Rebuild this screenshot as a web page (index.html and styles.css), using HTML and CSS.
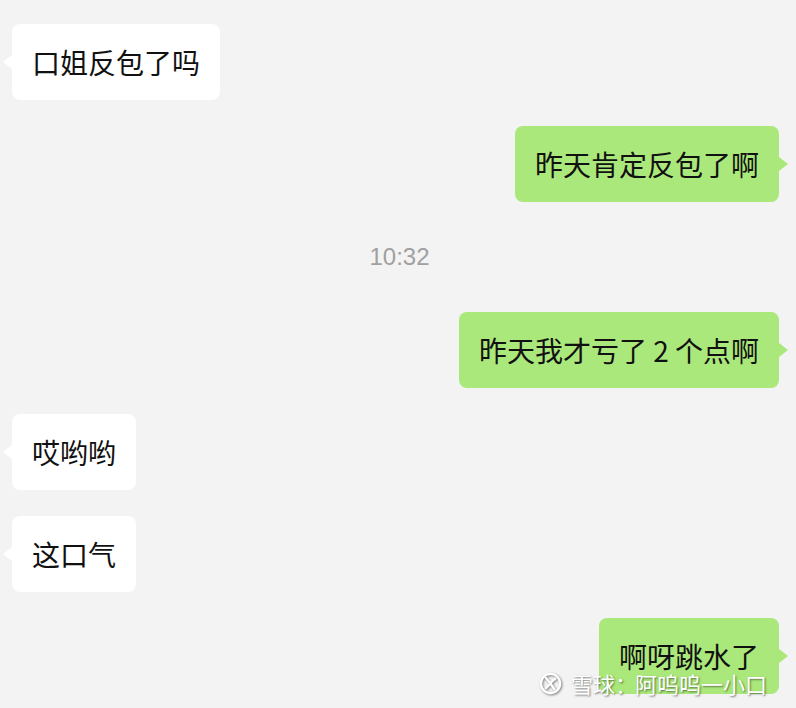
FILE: index.html
```html
<!DOCTYPE html>
<html lang="zh-CN">
<head>
<meta charset="utf-8">
<title>聊天记录</title>
<meta name="viewport" content="width=device-width,initial-scale=1">
<link rel="stylesheet" href="styles.css">
</head>
<body>

<div class="chat">
  <div class="msg in">口姐反包了吗</div>
  <div class="msg out">昨天肯定反包了啊</div>
  <div class="time">10:32</div>
  <div class="msg out">昨天我才亏了 2 个点啊</div>
  <div class="msg in">哎哟哟</div>
  <div class="msg in">这口气</div>
  <div class="msg out">啊呀跳水了</div>
</div>

<div class="mark">
  <svg viewBox="0 0 24 24" width="23" height="23">
    <circle cx="12" cy="12" r="10" fill="none" stroke="#fff" stroke-width="2.4"/>
    <path d="M7 6c3 3 6 7 9 12M17 7c-2 1-4 3-5 5M7 17c1-1 3-3 4-4" fill="none" stroke="#fff" stroke-width="2.4" stroke-linecap="round"/>
  </svg>
  <span>雪球<span class="colon">：</span>阿呜呜一小口</span>
</div>

</body>
</html>
```

FILE: styles.css
```css
:root{--bg:#f3f3f3;--green:#abe87b;--white:#fff;--fg:#111}
*{box-sizing:border-box}
body{margin:0;background:var(--bg);height:708px;overflow:hidden;position:relative;
     font-family:"Noto Sans CJK SC","Noto Sans",sans-serif;color:var(--fg)}
.chat{display:flex;flex-direction:column;gap:26px;padding:24px 17px 0 12px}
.msg{position:relative;font-size:28px;line-height:32px;padding:22px 20px;border-radius:8px;
     max-width:560px}
.msg::after{content:"";position:absolute;top:31px;border:7px solid transparent}
.in{align-self:flex-start;background:var(--white)}
.in::after{left:-16px;border-right:9px solid var(--white)}
.out{align-self:flex-end;background:var(--green)}
.out::after{right:-16px;border-left:9px solid var(--green)}
.time{height:58px;display:flex;align-items:center;justify-content:center;padding-left:8px;
      font-family:"Liberation Sans",sans-serif;font-size:24px;color:#a0a0a0}
.mark{position:absolute;left:539px;top:669px;display:flex;align-items:center;gap:9px;
      color:#fff;font-size:22px;line-height:28px;
      text-shadow:1px 1px 2px rgba(0,0,0,.5)}
.mark .colon{display:inline-block;width:20px;text-align:center}
.mark svg{filter:drop-shadow(1px 1px 1px rgba(0,0,0,.5))}
```
